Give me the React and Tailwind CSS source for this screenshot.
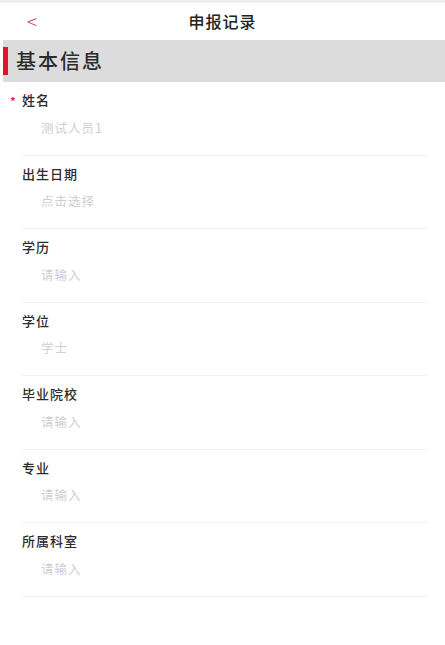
import React from 'react';

const fields = [
  { label: '姓名', value: '测试人员1', required: true },
  { label: '出生日期', value: '点击选择' },
  { label: '学历', value: '请输入' },
  { label: '学位', value: '学士' },
  { label: '毕业院校', value: '请输入' },
  { label: '专业', value: '请输入' },
  { label: '所属科室', value: '请输入' },
];

export default function App() {
  return (
    <div
      className="w-[445px] min-h-[645px] bg-white"
      style={{ fontFamily: '"Noto Sans CJK SC", "Noto Sans", sans-serif' }}
    >
      {/* top strip */}
      <div className="h-[3px] bg-[#eeeeee]" />

      {/* header */}
      <header className="relative h-[37px] flex items-center justify-center">
        <span className="absolute left-[27px] top-[8px] text-[19px] font-light text-[#d9434f] leading-none">&lt;</span>
        <h1 className="text-[16px] font-medium text-[#222] tracking-[1px] leading-none -mt-[2px]">申报记录</h1>
      </header>

      {/* section bar */}
      <div className="ml-[3px] h-[42px] bg-[#dcdcdc] flex items-center">
        <div className="w-[5px] h-[28px] bg-[#e8112d]" />
        <span className="ml-[8px] text-[20px] font-medium text-[#2b2b2b] tracking-[2px] leading-none">基本信息</span>
      </div>

      {/* fields */}
      <div>
        {fields.map((f) => (
          <div key={f.label} className="ml-[22px] mr-[18px] pt-[8px] pb-[16.5px] border-b border-[#f2f2f2] flex flex-col">
            <div className="relative h-[20px] flex items-center text-[13px] font-medium text-[#2b2b2b] tracking-[1px]">
              {f.required && (
                <span className="absolute left-[-12px] top-[2px] text-[12px] text-[#e8112d]">*</span>
              )}
              {f.label}
            </div>
            <div className="mt-[8px] ml-[19px] h-[20px] flex items-center text-[12.5px] text-[#cfcfcf] tracking-[1px]">
              {f.value}
            </div>
          </div>
        ))}
      </div>
    </div>
  );
}
